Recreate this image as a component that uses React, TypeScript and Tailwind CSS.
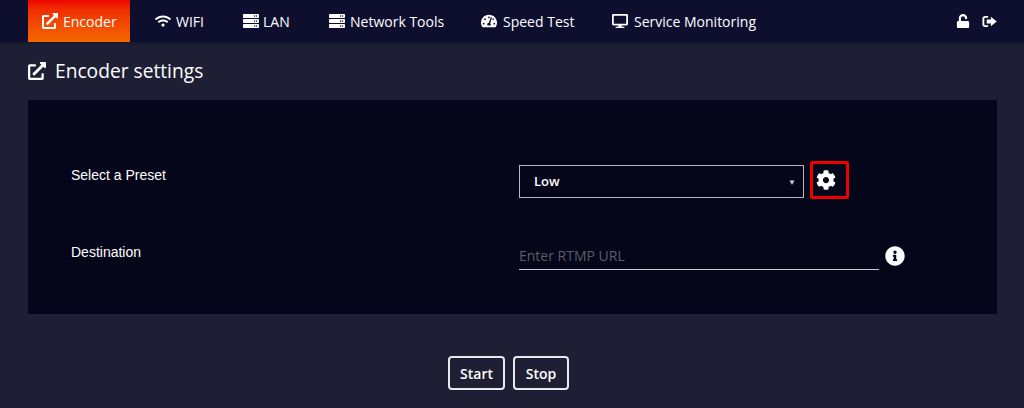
import { FaExternalLinkAlt, FaWifi, FaServer, FaTachometerAlt, FaDesktop, FaUnlock, FaCog, FaInfoCircle } from "react-icons/fa";
import type { IconType } from "react-icons";

const navItems: { label: string; icon: IconType; active?: boolean; width: string; gap: string }[] = [
  { label: "Encoder", icon: FaExternalLinkAlt, active: true, width: "w-[102px]", gap: "mr-[5px]" },
  { label: "WIFI", icon: FaWifi, width: "w-[88px]", gap: "mr-[5px]" },
  { label: "LAN", icon: FaServer, width: "w-[86px]", gap: "mr-[4px]" },
  { label: "Network Tools", icon: FaServer, width: "w-[152px]", gap: "mr-[5px]" },
  { label: "Speed Test", icon: FaTachometerAlt, width: "w-[131px]", gap: "mr-[6px]" },
  { label: "Service Monitoring", icon: FaDesktop, width: "w-[170px]", gap: "mr-[6px]" },
];

const arial = "font-['Liberation_Sans',Arial,sans-serif]";

function SignOutIcon() {
  return (
    <svg viewBox="0 0 16 14" className="h-[13px] w-[15px]" fill="currentColor">
      <path d="M6.5 1v2H3.4c-.6 0-1 .4-1 1v6c0 .6.4 1 1 1h3.1v2H3.2C1.500 13 .4 11.900.4 10.300V3.700C.4 2.100 1.500 1 3.200 1z" />
      <path d="M9.500 1.800 15.800 7l-6.300 5.200V9.200H5V4.800h4.500z" />
    </svg>
  );
}

export default function App() {
  return (
    <div className="h-[408px] w-[1024px] overflow-hidden bg-[#1e1f35] font-['Open_Sans',sans-serif] text-white">
      <nav className="flex h-[42px] items-stretch justify-between bg-[#0e0f2f] pl-[28px] pr-[27px] shadow-[0_1px_3px_rgba(0,0,0,0.3)]">
        <div className="flex">
          {navItems.map((item) => {
            const Icon = item.icon;
            return (
              <div
                key={item.label}
                className={`flex items-center text-[14px] ${item.width} ${
                  item.active ? "bg-gradient-to-b from-[#ee0000] to-[#f56500] pl-[14px]" : "pl-[25px]"
                }`}
              >
                <Icon className={`${item.gap} shrink-0 text-[16px]`} />
                <span>{item.label}</span>
              </div>
            );
          })}
        </div>
        <div className="flex items-center gap-[12px]">
          <FaUnlock className="text-[14px]" />
          <SignOutIcon />
        </div>
      </nav>

      <div className="pl-[28px] pr-[27px]">
        <h1 className="flex h-[58px] items-center text-[19.2px] font-normal">
          <FaExternalLinkAlt className="mr-[9px] text-[18px]" />
          Encoder settings
        </h1>

        <div className="h-[214px] bg-[#05061a] pl-[43px] pt-[61px]">
          <div className="flex h-[38px] items-center">
            <label className={`w-[448px] -translate-y-[5px] text-[14px] ${arial}`}>Select a Preset</label>
            <div className="mb-[1px] flex h-[33px] w-[285px] items-center justify-between self-end border border-[#b8b8c0] pl-[14px] pr-[7px] text-[13px] font-semibold">
              <span>Low</span>
              <span className="text-[8px] text-[#c8c8c8]">▼</span>
            </div>
            <button className="ml-[6px] flex h-[38px] w-[39px] items-center justify-start rounded-[2px] border-[3px] border-[#ee0000] pl-[3px] text-[20px]">
              <FaCog />
            </button>
          </div>

          <div className="mt-[43px] flex h-[28px] items-center">
            <label className={`w-[448px] -translate-y-[4px] text-[14px] ${arial}`}>Destination</label>
            <div className="flex h-[28px] w-[360px] items-center border-b border-[#c8c8d0] text-[14px] text-[#5c5c68]">
              Enter RTMP URL
            </div>
            <FaInfoCircle className="ml-[6px] text-[20px]" />
          </div>
        </div>

        <div className="mt-[42px] flex gap-[8px] pl-[420px]">
          <button className="h-[34px] w-[57px] rounded-[4px] border-2 border-[#e8e8ee] text-[14px] font-semibold">Start</button>
          <button className="h-[34px] w-[56px] rounded-[4px] border-2 border-[#e8e8ee] text-[14px] font-semibold">Stop</button>
        </div>
      </div>
    </div>
  );
}
